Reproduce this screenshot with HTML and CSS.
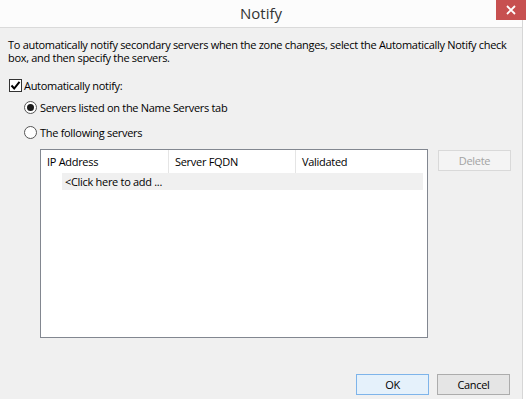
FILE: index.html
```html
<!DOCTYPE html>
<html lang="en">
<head>
    <meta charset="UTF-8">
    <title>Notify</title>
    <link rel="stylesheet" href="styles.css">
</head>
<body>
    <div class="window">
        <div class="titlebar">
            <span class="title">Notify</span>
            <button class="close-btn" aria-label="Close">
                <svg width="10" height="10" viewBox="0 0 10 10"><path d="M1 1L9 9M9 1L1 9" stroke="#fff" stroke-width="1.8"/></svg>
            </button>
        </div>

        <div class="content">
            <p class="intro">To automatically notify secondary servers when the zone changes, select the Automatically Notify check box, and then specify the servers.</p>

            <label class="option check">
                <span class="checkbox">
                    <svg width="11" height="11" viewBox="0 0 11 11"><path d="M1.5 5.5L4.2 8.5L9.5 1.8" fill="none" stroke="#000" stroke-width="2"/></svg>
                </span>
                Automatically notify:
            </label>

            <label class="option radio-row">
                <span class="radio checked"></span>
                Servers listed on the Name Servers tab
            </label>

            <label class="option radio-row">
                <span class="radio"></span>
                The following servers
            </label>

            <div class="servers">
                <div class="listbox">
                    <div class="list-header">
                        <div class="col col-ip">IP Address</div>
                        <div class="col col-fqdn">Server FQDN</div>
                        <div class="col col-valid">Validated</div>
                    </div>
                    <div class="list-row">
                        <div class="add-cell">&lt;Click here to add ...</div>
                    </div>
                </div>
                <button class="btn btn-disabled">Delete</button>
            </div>
        </div>

        <div class="footer">
            <button class="btn btn-default">OK</button>
            <button class="btn">Cancel</button>
        </div>
    </div>
</body>
</html>
```

FILE: styles.css
```css
html, body {
    margin: 0;
    padding: 0;
    background-color: #fff;
}
body {
    font-family: "Open Sans", "Noto Sans", sans-serif;
    font-size: 11px;
    letter-spacing: -0.3px;
    color: #000;
}
.window {
    width: 522px;
    height: 399px;
    background-color: #f0f0f0;
    border-right: 1px solid #d6d6d6;
    display: flex;
    flex-direction: column;
}
.titlebar {
    height: 27px;
    background-color: #fcfcfc;
    border-bottom: 1px solid #dadada;
    display: flex;
    justify-content: center;
    position: relative;
}
.title {
    font-size: 15px;
    letter-spacing: 0;
    color: #333;
    line-height: 27px;
}
.close-btn {
    position: absolute;
    top: 0;
    right: -4px;
    width: 30px;
    height: 20px;
    border: none;
    padding: 0;
    background-color: #c75050;
    display: flex;
    align-items: center;
    justify-content: center;
}
.content {
    padding: 10px 0 0 8px;
    flex: 1;
}
.intro {
    margin: 0;
    line-height: 13px;
    width: 510px;
}
.option {
    display: flex;
    align-items: center;
    height: 18px;
}
.check {
    margin-top: 12px;
    padding-left: 1px;
}
.radio-row {
    margin-top: 4px;
    padding-left: 16px;
}
.radio-row + .radio-row {
    margin-top: 7px;
}
.checkbox {
    width: 11px;
    height: 11px;
    border: 1px solid #333;
    background-color: #fff;
    margin-right: 2px;
    display: flex;
}
.radio {
    width: 11px;
    height: 11px;
    border: 1px solid #555;
    border-radius: 50%;
    background-color: #fff;
    margin-right: 3px;
    display: flex;
    align-items: center;
    justify-content: center;
}
.radio.checked::after {
    content: "";
    width: 7px;
    height: 7px;
    border-radius: 50%;
    background-color: #1a1a1a;
}
.servers {
    display: flex;
    align-items: flex-start;
    margin-top: 8px;
    padding-left: 32px;
}
.listbox {
    width: 386px;
    height: 187px;
    border: 1px solid #828790;
    background-color: #fff;
    margin-right: 10px;
}
.list-header {
    display: flex;
    width: 382px;
    height: 23px;
}
.col {
    line-height: 23px;
    padding-left: 6px;
    border-right: 1px solid #e5e5e5;
}
.col-ip {
    width: 121px;
}
.col-fqdn {
    width: 120px;
}
.col-valid {
    width: 120px;
    border-right: none;
}
.list-row {
    padding-left: 21px;
    width: 361px;
}
.add-cell {
    background-color: #f0f0f0;
    line-height: 17px;
    padding-left: 3px;
}
.btn {
    width: 73px;
    height: 21px;
    font-family: inherit;
    font-size: 11px;
    letter-spacing: -0.3px;
    color: #000;
    padding: 0;
    border: 1px solid #acacac;
    background-color: #e5e5e5;
}
.btn-disabled {
    margin-top: 1px;
    color: #a3a3a3;
    border-color: #d9d9d9;
    background-color: #f4f4f4;
}
.footer {
    display: flex;
    justify-content: flex-end;
    gap: 8px;
    padding: 0 12px 4px 0;
}
.btn-default {
    border-color: #7eb4ea;
    background-color: #e5f1fb;
}
```
